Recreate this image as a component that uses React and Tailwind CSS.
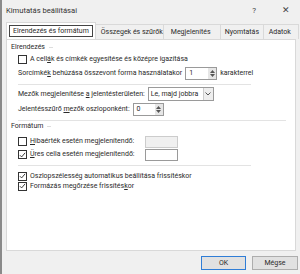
import React from "react";

const font = { fontFamily: 'Roboto, "Liberation Sans", sans-serif' };

function Check({ checked }) {
  return (
    <span className="w-[9px] h-[9px] border border-[#333] bg-white flex items-center justify-center shrink-0">
      {checked && (
        <svg width="8" height="8" viewBox="0 0 8 8">
          <path d="M1 4.2 L3 6.2 L7 1.5" fill="none" stroke="#222" strokeWidth="1" />
        </svg>
      )}
    </span>
  );
}

function Spin({ value, w }) {
  return (
    <div className={`flex h-[13px] border border-[#9a9a9a] bg-white shrink-0 ${w}`}>
      <div className="flex-1 pl-[3px] leading-[11px]">{value}</div>
      <div className="w-[8px] bg-[#e6e6e6] flex flex-col items-center justify-center gap-[1px]">
        <svg width="5" height="3" viewBox="0 0 5 3"><path d="M0 3 L2.5 0 L5 3Z" fill="#555" /></svg>
        <svg width="5" height="3" viewBox="0 0 5 3"><path d="M0 0 L2.5 3 L5 0Z" fill="#555" /></svg>
      </div>
    </div>
  );
}

export default function App() {
  return (
    <div className="w-[300px] h-[274px] bg-[#f0f0f0] text-[#2a2a2a] text-[7px] whitespace-nowrap overflow-hidden flex flex-col border-l-2 border-[#8a8a8a]" style={font}>
      <div className="h-[22px] flex items-center pl-[4px] pr-[10px] shrink-0">
        <span className="text-[7.6px] text-[#333]">Kimutatás beállításai</span>
        <span className="ml-auto text-[8px] text-[#444]">?</span>
        <span className="ml-[26px] text-[9px] text-[#444]">✕</span>
      </div>
      <div className="flex items-end h-[17px] pl-[4px] shrink-0">
        <div className="h-[17px] bg-white border border-b-0 border-[#d9d9d9] px-[2px] pt-[2px] relative z-10 shrink-0">
          <div className="border border-[#444] px-[3px] leading-[10px]">Elrendezés és formátum</div>
        </div>
        <div className="h-[15px] w-[68px] border border-b-0 border-l-0 border-[#d9d9d9] px-[5px] leading-[14px] shrink-0">Összegek és szűrők</div>
        <div className="h-[15px] w-[57px] border border-b-0 border-l-0 border-[#d9d9d9] pl-[7px] leading-[14px] shrink-0">Megjelenítés</div>
        <div className="h-[15px] w-[43px] border border-b-0 border-l-0 border-[#d9d9d9] pl-[4px] leading-[14px] shrink-0">Nyomtatás</div>
        <div className="h-[15px] w-[35px] border border-b-0 border-l-0 border-[#d9d9d9] pl-[5px] leading-[14px] shrink-0">Adatok</div>
      </div>
      <div className="ml-[4px] mr-[4px] h-[212px] bg-white border border-[#d9d9d9] shrink-0 flex flex-col pl-[4px]">
        <div className="flex items-center gap-[4px] mt-[2px] h-[10px]">
          <span>Elrendezés</span>
          <div className="w-[4px] h-px bg-[#ddd]" />
        </div>
        <div className="pl-[7px] flex flex-col">
          <div className="flex items-center gap-[3px] h-[12px] mt-[1px]">
            <Check />
            <span>A cell<u>á</u>k és címkék egyesítése és középre igazítása</span>
          </div>
          <div className="flex items-center h-[14px] mt-[1px]">
            <span>Sorcímké<u>k</u> behúzása összevont forma használatakor</span>
            <div className="ml-[3px]"><Spin value="1" w="w-[32px]" /></div>
            <span className="ml-[3px]">karakterrel</span>
          </div>
          <div className="h-px bg-[#e3e3e3] w-[233px] mt-[4px]" />
          <div className="flex items-center h-[14px] mt-[2px]">
            <span>Mezők megjelenítése <u>a</u> jelentésterületen:</span>
            <div className="ml-[3px] flex h-[14px] w-[66px] border border-[#9a9a9a] bg-white shrink-0">
              <div className="flex-1 pl-[2px] leading-[12px]">Le, majd jobbra</div>
              <div className="w-[10px] border-l border-[#ccc] bg-[#eee] flex items-center justify-center">
                <svg width="6" height="4" viewBox="0 0 6 4"><path d="M0.5 0.5 L3 3 L5.5 0.5" fill="none" stroke="#555" strokeWidth="1" /></svg>
              </div>
            </div>
          </div>
          <div className="flex items-center h-[14px] mt-[1px]">
            <span>Jelentésszűrő <u>m</u>ezők oszloponként:</span>
            <div className="ml-[3px]"><Spin value="0" w="w-[31px]" /></div>
          </div>
        </div>
        <div className="h-px bg-[#e3e3e3] w-[268px] mt-[4px] ml-[7px]" />
        <div className="flex items-center gap-[4px] h-[10px]">
          <span>Formátum</span>
          <div className="w-[4px] h-px bg-[#ddd]" />
        </div>
        <div className="pl-[7px] flex flex-col">
          <div className="flex items-center h-[13px] mt-[4px]">
            <Check />
            <span className="ml-[3px] w-[115px]"><u>H</u>ibaérték esetén megjelenítendő:</span>
            <div className="w-[33px] h-[12px] border border-[#ccc] bg-[#f0f0f0] shrink-0" />
          </div>
          <div className="flex items-center h-[13px]">
            <Check checked />
            <span className="ml-[3px] w-[115px]"><u>Ü</u>res cella esetén megjelenítendő:</span>
            <div className="w-[33px] h-[12px] border border-[#9a9a9a] bg-white shrink-0" />
          </div>
          <div className="h-px bg-[#e3e3e3] w-[233px] mt-[4px]" />
          <div className="flex items-center gap-[3px] h-[10px] mt-[5px]">
            <Check checked />
            <span>Oszlopszélesség automatikus beállítása frissítéskor</span>
          </div>
          <div className="flex items-center gap-[3px] h-[10px]">
            <Check checked />
            <span>Formázás megőrzése frissítés<u>k</u>or</span>
          </div>
        </div>
      </div>
      <div className="flex justify-end gap-[6px] pr-[2px] mt-[5px]">
        <div className="w-[45px] h-[14px] border border-[#2f7dd6] bg-[#e1e1e1] flex items-center justify-center">OK</div>
        <div className="w-[46px] h-[14px] border border-[#adadad] bg-[#e1e1e1] flex items-center justify-center">Mégse</div>
      </div>
    </div>
  );
}
